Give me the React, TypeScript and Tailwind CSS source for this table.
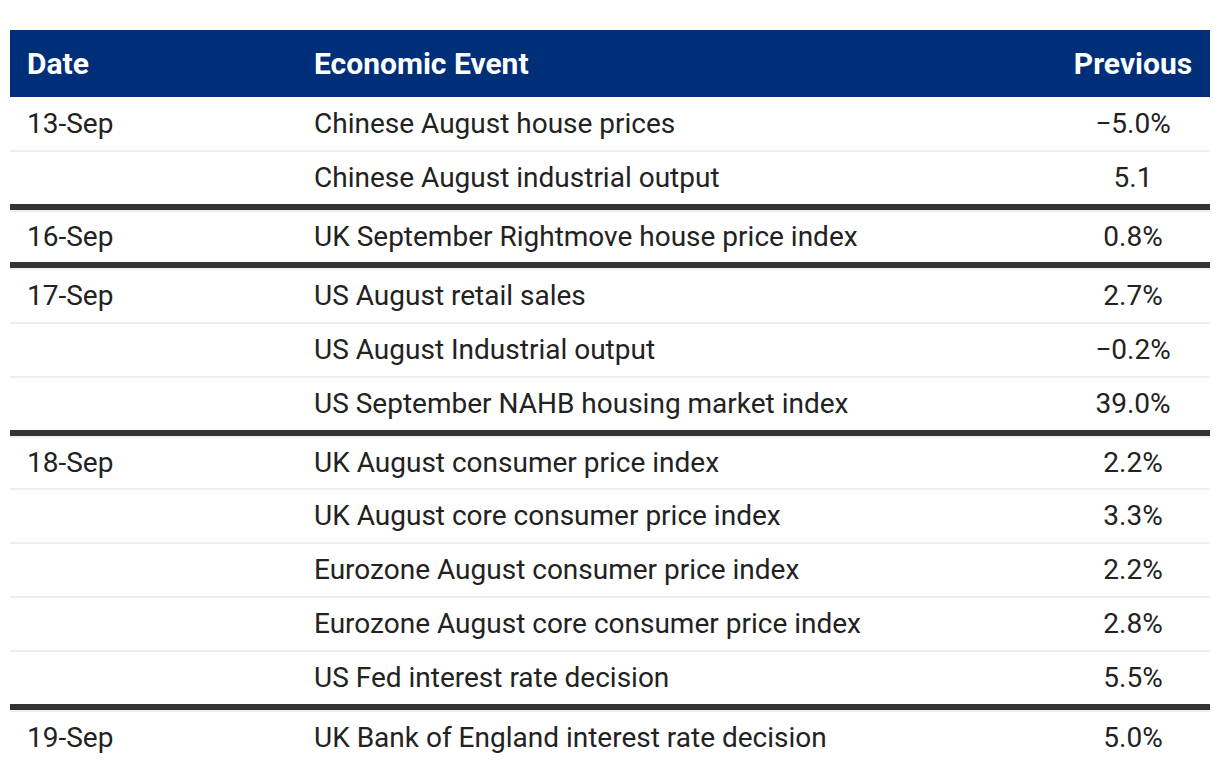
type Group = { date: string; tight?: boolean; rows: [string, string][] };

const GROUPS: Group[] = [
  {
    date: '13-Sep',
    rows: [
      ['Chinese August house prices', '\u22125.0%'],
      ['Chinese August industrial output', '5.1'],
    ],
  },
  { date: '16-Sep', tight: true, rows: [['UK September Rightmove house price index', '0.8%']] },
  {
    date: '17-Sep',
    rows: [
      ['US August retail sales', '2.7%'],
      ['US August Industrial output', '\u22120.2%'],
      ['US September NAHB housing market index', '39.0%'],
    ],
  },
  {
    date: '18-Sep',
    tight: true,
    rows: [
      ['UK August consumer price index', '2.2%'],
      ['UK August core consumer price index', '3.3%'],
      ['Eurozone August consumer price index', '2.2%'],
      ['Eurozone August core consumer price index', '2.8%'],
      ['US Fed interest rate decision', '5.5%'],
    ],
  },
  { date: '19-Sep', rows: [['UK Bank of England interest rate decision', '5.0%']] },
];

const COLS = 'grid grid-cols-[287px_1fr_154px] items-center';

function rowClass(gi: number, ri: number, tight?: boolean) {
  if (gi === 0 && ri === 0) return 'h-[53px]';
  if (ri === 0 && tight) return 'h-[52px] border-t-2 border-[#eeeeee]';
  return 'h-[54px] border-t-2 border-[#eeeeee]';
}

export default function App() {
  return (
    <div className="min-h-screen bg-white pt-[30px] px-[10px] font-['Roboto',sans-serif] text-[#222]">
      {/* Header */}
      <div className={`${COLS} h-[67px] bg-[#002f7a] text-white text-[30px] font-bold`}>
        <div className="px-[17px]">Date</div>
        <div className="px-[17px]">Economic Event</div>
        <div className="px-[17px] text-center">Previous</div>
      </div>

      {/* Body */}
      <div className="text-[28px]">
        {GROUPS.map((g, gi) => (
          <div key={g.date} className={gi > 0 ? 'border-t-[6px] border-[#333]' : ''}>
            {g.rows.map(([event, prev], ri) => (
              <div key={event} className={`${COLS} ${rowClass(gi, ri, g.tight)}`}>
                <div className="px-[17px]">{ri === 0 ? g.date : ''}</div>
                <div className="px-[17px]">{event}</div>
                <div className="px-[17px] text-center">{prev}</div>
              </div>
            ))}
          </div>
        ))}
      </div>
    </div>
  );
}
